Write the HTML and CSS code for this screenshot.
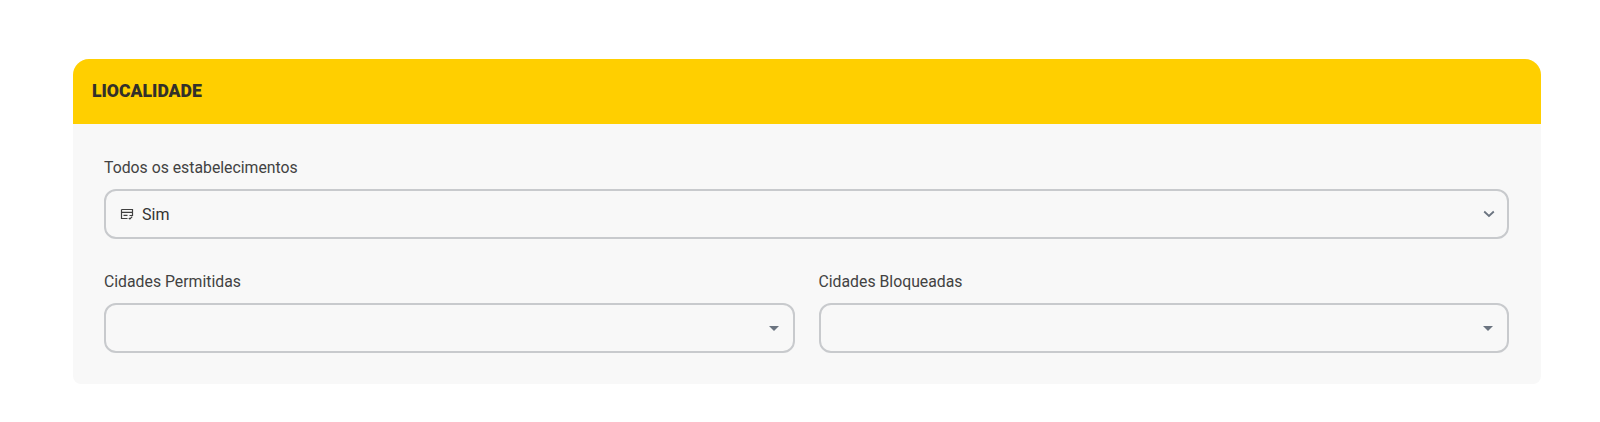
FILE: index.html
```html
<!DOCTYPE html>
<html lang="pt-BR">
<head>
    <meta charset="UTF-8">
    <meta name="viewport" content="width=device-width, initial-scale=1.0">
    <title>Localidade</title>
    <link rel="stylesheet" href="styles.css">
</head>
<body>

<section class="card">
    <header class="card-header">
        <h2>LIOCALIDADE</h2>
    </header>

    <div class="card-body">
        <div class="field">
            <label>Todos os estabelecimentos</label>
            <div class="select">
                <svg class="store-icon" width="14" height="14" viewBox="0 0 14 14" fill="none" stroke="#404040" stroke-width="1.2">
                    <path d="M1.5 2.5h11v6h-3"/>
                    <path d="M1.5 2.5v9h6"/>
                    <path d="M1.5 5.4h11"/>
                    <path d="M3.5 8.4h4"/>
                    <path d="M8.8 11l1.1 1 2.3-2.4"/>
                </svg>
                <span>Sim</span>
                <svg class="chevron" width="12" height="8" viewBox="0 0 12 8" fill="none" stroke="#6b7480" stroke-width="1.8">
                    <path d="M1.2 1.5L6 6l4.8-4.5"/>
                </svg>
            </div>
        </div>

        <div class="row">
            <div class="field">
                <label>Cidades Permitidas</label>
                <div class="select">
                    <i class="caret"></i>
                </div>
            </div>
            <div class="field">
                <label>Cidades Bloqueadas</label>
                <div class="select">
                    <i class="caret"></i>
                </div>
            </div>
        </div>
    </div>
</section>

</body>
</html>
```

FILE: styles.css
```css
body {
    font-family: Roboto, Arial, sans-serif;
    margin: 0;
    padding: 59px 59px 37px 73px;
    background-color: #fff;
    color: #424242;
}

.card {
    background-color: #f8f8f8;
    border-radius: 16px 16px 8px 8px;
    overflow: hidden;
}

.card-header {
    background-color: #ffcf00;
    height: 65px;
    box-sizing: border-box;
    display: flex;
    align-items: center;
    padding: 0 19px 2px;
}

.card-header h2 {
    margin: 0;
    font-size: 17.6px;
    font-weight: 900;
    color: #33302a;
}

.card-body {
    padding: 34px 32px 31px 31px;
    display: flex;
    flex-direction: column;
    gap: 33px;
}

.row {
    display: grid;
    grid-template-columns: 1fr 1fr;
    gap: 24px;
}

.field label {
    display: block;
    font-size: 15.8px;
    line-height: 20px;
    margin-bottom: 11px;
}

.select {
    height: 50px;
    box-sizing: border-box;
    border: 2px solid #c8cacd;
    border-radius: 12px;
    display: flex;
    align-items: center;
    padding: 0 14px;
    font-size: 16px;
    color: #333;
}

.store-icon {
    margin-right: 8px;
}

.chevron {
    margin-left: auto;
    margin-right: -2px;
}

.caret {
    margin-left: auto;
    width: 0;
    height: 0;
    border-left: 5px solid transparent;
    border-right: 5px solid transparent;
    border-top: 5px solid #6b7480;
}
```
